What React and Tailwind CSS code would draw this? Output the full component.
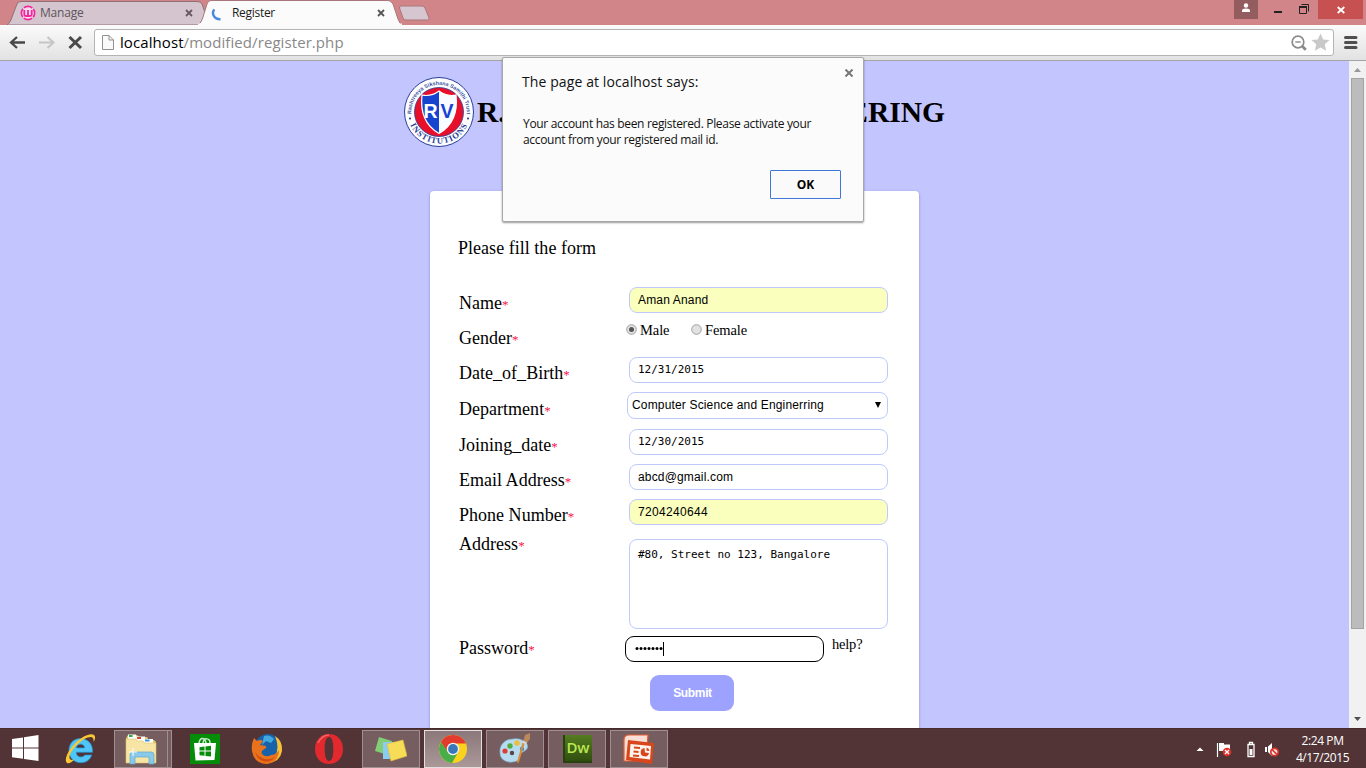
import React from "react";

const serif = "font-['Liberation_Serif',serif]";
const sans = "font-['Liberation_Sans',sans-serif]";
const mono = "font-['DejaVu_Sans_Mono',monospace]";
const ui = "font-['Open_Sans','Noto_Sans',sans-serif]";

function TabClose({ color }) {
  return (
    <svg className="h-2 w-2 shrink-0" viewBox="0 0 8 8">
      <path d="M1 1l6 6M7 1l-6 6" stroke={color} strokeWidth="1.8" />
    </svg>
  );
}

function TabStrip() {
  return (
    <div className="flex h-[25px] shrink-0 bg-[#d28589] pl-[7px]">
      <div className="relative z-0 flex h-[25px] w-[191px] items-center pl-[13px]">
        <svg className="absolute top-0 left-0 -z-10 h-[25px] w-[200px]" viewBox="0 0 200 25">
          <path d="M0 25C3 23 4 20 5 17L10 4Q11 1.5 14 1.5H190Q194 1.5 195 4L200 18V25Z" fill="#d5c5cf" stroke="#8f7078" strokeWidth="1" />
        </svg>
        <svg className="h-4 w-4 shrink-0" viewBox="0 0 16 16">
          <circle cx="8" cy="8" r="6.6" fill="#f6dcec" stroke="#f0269b" strokeWidth="1.7" strokeDasharray="9 1.37" strokeDashoffset="4.5" />
          <path d="M4.3 5V9.6Q4.3 11 6 11H10Q11.7 11 11.7 9.6V5M8 5v6" fill="none" stroke="#f0269b" strokeWidth="1.8" />
        </svg>
        <span className={`${ui} ml-1 w-[145px] text-[12px] leading-4 tracking-[-0.2px] text-[#5d565a]`}>Manage</span>
        <TabClose color="#665b60" />
      </div>
      <div className="relative z-10 flex h-[25px] w-[200px] items-center pl-[13px]">
        <svg className="absolute top-0 left-0 -z-10 h-[25px] w-[204px]" viewBox="0 0 204 25">
          <path d="M0 25C3 23 4 20 5 17L9 4Q10 .5 13 .5H190Q193 .5 195 4L200 19Q202 24 204 25Z" fill="#fbfbfb" stroke="#a8777c" strokeWidth="1" />
          <path d="M0 24.5H204" stroke="#fbfbfb" strokeWidth="2" />
        </svg>
        <svg className="h-4 w-[11px] shrink-0" viewBox="0 0 11 16">
          <path d="M3.3 4.4C.2 8.5 3 14.5 9.5 14.3" fill="none" stroke="#4688e0" strokeWidth="2.4" />
        </svg>
        <span className={`${ui} ml-[10px] w-[145px] text-[12px] leading-4 tracking-[-0.3px] text-[#1c1c1c]`}>Register</span>
        <TabClose color="#555" />
      </div>
      <svg className="mt-[5px] h-4 w-8" viewBox="0 0 32 16">
        <path d="M1.5 3Q1 1 3 1H24Q26 1 27 3L31 13Q31.500 15 29.500 15H8Q6 15 5 13Z" fill="#d6c6cf" stroke="#aa767d" />
      </svg>
      <div className="ml-auto flex h-[19px]">
        <div className="flex w-6 items-start justify-center bg-[#935c5f] pt-[3px]">
          <svg className="h-[10px] w-[10px]" viewBox="0 0 10 10" fill="#fff">
            <circle cx="5" cy="2.5" r="2.2" />
            <path d="M1 9V7.500Q1 5.500 5 5.500T9 7.500V9Z" />
          </svg>
        </div>
        <svg className="h-[19px] w-[60px]" viewBox="0 0 60 19">
          <path d="M16 12h8" stroke="#222" strokeWidth="2" />
          <path d="M43.500 4.500H50.500V11.500M41.500 6.500h7v7h-7z" fill="none" stroke="#222" />
          <path d="M41 7h8" stroke="#222" strokeWidth="2" />
        </svg>
        <div className="mr-[3px] flex w-[45px] items-center justify-center bg-[#c75050]">
          <svg className="h-2 w-2" viewBox="0 0 8 8"><path d="M.7 1l6.600 6M7.300 1l-6.600 6" stroke="#fff" strokeWidth="1.800" /></svg>
        </div>
      </div>
    </div>
  );
}

function Toolbar() {
  return (
    <div className="flex h-9 shrink-0 items-start border-b border-[#a5a5a5] bg-linear-to-b from-[#fbfbfb] to-[#e2e2e2] pt-1">
      <svg className="h-[27px] w-[94px] shrink-0" viewBox="0 0 94 27" fill="none">
        <path d="M25 13.500H11.500M17 8L11 13.500L17 19" stroke="#484848" strokeWidth="2.300" />
        <path d="M39 13.500H52.500M47.500 8L53.500 13.500L47.500 19" stroke="#c6c6c6" strokeWidth="2.100" />
        <path d="M69.500 8l11.500 11M81 8L69.500 19" stroke="#484848" strokeWidth="3" />
      </svg>
      <div className="flex h-[27px] w-[1240px] items-center rounded-[3px] border border-[#b4b4b4] bg-white pl-[7px]">
        <svg className="h-[15px] w-3" viewBox="0 0 12 15">
          <path d="M.5.5H7L11.500 5V14.500H.500Z" fill="#fafafa" stroke="#919191" />
          <path d="M7 .5V5H11.500" fill="none" stroke="#919191" />
        </svg>
        <span className={`${ui} ml-[6px] pb-[2px] text-[15px] leading-5 tracking-[0.08px] whitespace-nowrap text-[#888]`}>
          <span className="text-black">localhost</span>/modified/register.php
        </span>
        <svg className="ml-auto h-[27px] w-[43px]" viewBox="0 0 43 27">
          <circle cx="8" cy="13" r="5.800" fill="none" stroke="#8b8b8b" strokeWidth="1.700" />
          <path d="M5.300 13h5.400" stroke="#8b8b8b" strokeWidth="1.400" />
          <path d="M12.200 17.200l3.600 3.600" stroke="#8b8b8b" strokeWidth="2.800" />
          <path d="M30.500 4.500l2.700 6 6.300.6-4.700 4.200 1.300 6.400-5.600-3.300-5.600 3.300 1.300-6.400-4.700-4.200 6.300-.6z" fill="#c9c9c9" />
        </svg>
      </div>
      <svg className="ml-[10px] h-[27px] w-[14px]" viewBox="0 0 14 27">
        <path d="M1.500 8.500h10.500M1.500 13.500h10.500M1.500 18.500h10.500" stroke="#505050" strokeWidth="3" strokeLinecap="round" />
      </svg>
    </div>
  );
}

function Crest() {
  return (
    <svg className="h-[72px] w-[72px] shrink-0" viewBox="0 0 72 72">
      <defs>
        <path id="crest-top" d="M8.300 39A27.800 27.800 0 1 1 63.700 39" />
        <path id="crest-bottom" d="M4.500 36a31.500 31.500 0 0 0 63 0" />
      </defs>
      <circle cx="36" cy="36" r="34.500" fill="#fdfdff" stroke="#2a4098" strokeWidth="1" />
      <circle cx="36" cy="36" r="24.500" fill="#e80f2a" stroke="#2a4098" strokeWidth=".8" />
      <path d="M36 15Q28 21 19 19Q16 46 36 57.500Z" fill="#1644cf" />
      <path d="M36 15Q44 21 53 19Q56 46 36 57.500Z" fill="#f8fbff" />
      <path d="M36 15Q28 21 19 19Q16 46 36 57.500Q56 46 53 19Q44 21 36 15Z" fill="none" stroke="#fff" strokeWidth="1.200" />
      <text x="20.500" y="41.500" fontSize="19.500" fontWeight="bold" fontFamily="Liberation Sans, sans-serif" fill="#fff">R</text>
      <text x="37.500" y="41.500" fontSize="19.500" fontWeight="bold" fontFamily="Liberation Sans, sans-serif" fill="#1644cf">V</text>
      <text fontSize="5.300" fontWeight="bold" fontFamily="Liberation Sans, sans-serif" fill="#36549f">
        <textPath href="#crest-top" startOffset="1" textLength="90">Rashtreeya Sikshana Samithi Trust</textPath>
      </text>
      <text fontSize="8.500" fontWeight="bold" letterSpacing=".9" fontFamily="Liberation Serif, serif" fill="#2a4098" textAnchor="middle">
        <textPath href="#crest-bottom" startOffset="50%">INSTITUTIONS</textPath>
      </text>
      <circle cx="7" cy="42.500" r="1.100" fill="#2a4098" />
      <circle cx="65" cy="42.500" r="1.100" fill="#2a4098" />
    </svg>
  );
}

function Row({ label, height, pad, children }) {
  return (
    <div className={`flex shrink-0 items-start ${height}`}>
      <div className={`w-[170px] shrink-0 text-[18px] leading-5 tracking-[0.02px] whitespace-nowrap text-black ${pad}`}>
        {label}
        <span className="text-[13px] leading-none text-[#f8134b]">*</span>
      </div>
      {children}
    </div>
  );
}

function Field({ value, tone = "bg-white", face = sans }) {
  return (
    <div className={`flex h-[26px] w-[259px] items-center rounded-[8px] border border-[#bfcafb] pl-[8px] text-black ${tone} ${face}`}>
      {value}
    </div>
  );
}

const sansText = `${sans} text-[12px] tracking-[0.16px]`;
const monoText = `${mono} text-[11px]`;

function Radio({ checked }) {
  return (
    <svg className="h-[11px] w-[11px]" viewBox="0 0 11 11">
      <circle cx="5.500" cy="5.500" r="4.800" fill="#e2e2e2" stroke="#a0a0a0" />
      {checked && <circle cx="5.500" cy="5.500" r="2.500" fill="#555" />}
    </svg>
  );
}

function Form() {
  return (
    <div className={`${serif} ml-[430px] flex h-[537px] w-[489px] shrink-0 flex-col rounded-t-[4px] bg-white pl-[29px] shadow-[0_1px_2px_1px_rgba(110,110,170,0.3)]`}>
      <div className="-ml-px h-[96px] shrink-0 pt-[47px] text-[18px] leading-5 tracking-[0.03px] text-black">Please fill the form</div>
      <Row label="Name" height="h-[35px]" pad="pt-[6px]">
        <Field value="Aman Anand" tone="bg-[#faffbd]" face={sansText} />
      </Row>
      <Row label="Gender" height="h-[35px]" pad="pt-[6px]">
        <div className="-ml-[3px] flex items-start pt-[2px] text-[14.500px] leading-4 tracking-[-0.1px] text-black">
          <Radio checked />
          <span className="-mt-[2px] ml-[3px] w-[51px]">Male</span>
          <Radio />
          <span className="-mt-[2px] ml-[3px]">Female</span>
        </div>
      </Row>
      <Row label="Date_of_Birth" height="h-[35px]" pad="pt-[6px]">
        <Field value="12/31/2015" face={monoText} />
      </Row>
      <Row label="Department" height="h-[37px]" pad="pt-[7px]">
        <div className={`${sansText} -ml-[2px] flex h-[27px] w-[261px] items-center justify-between rounded-[8px] border border-[#bfcafb] bg-white pr-[6px] pb-px pl-[4px] text-black`}>
          <span>Computer Science and Enginerring</span>
          <svg className="h-[6px] w-[6px]" viewBox="0 0 6 6"><path d="M0 0h6L3 6z" fill="#000" /></svg>
        </div>
      </Row>
      <Row label="Joining_date" height="h-[35px]" pad="pt-[6px]">
        <Field value="12/30/2015" face={monoText} />
      </Row>
      <Row label="Email Address" height="h-[35px]" pad="pt-[6px]">
        <Field value="abcd@gmail.com" face={sansText} />
      </Row>
      <Row label="Phone Number" height="h-[40px]" pad="pt-[6px]">
        <Field value="7204240644" tone="bg-[#faffbd]" face={`${sans} text-[12px] tracking-[0.33px]`} />
      </Row>
      <Row label="Address" height="h-[97px]" pad="-mt-[5px]">
        <div className={`${monoText} h-[90px] w-[259px] rounded-[8px] border border-[#bfcafb] bg-white pt-[8px] pl-[8px] leading-[14px] text-black`}>
          #80, Street no 123, Bangalore
        </div>
      </Row>
      <Row label="Password" height="h-[39px]" pad="pt-[2px]">
        <div className="-ml-[4px] flex h-[26px] w-[199px] items-center rounded-[9px] border border-black bg-white pl-[9px]">
          <svg className="h-[14px] w-[31px]" viewBox="0 0 31 14">
            {[0, 1, 2, 3, 4, 5, 6].map((n) => (
              <circle key={n} cx={2 + n * 4} cy="6.500" r="1.500" fill="#000" />
            ))}
            <path d="M28.500 0V14" stroke="#000" />
          </svg>
        </div>
        <span className="-mt-px ml-[8px] text-[14.500px] leading-[18px] tracking-[-0.2px] text-black">help?</span>
      </Row>
      <div className={`${sans} ml-[191px] flex h-9 w-[84px] shrink-0 items-center justify-center rounded-[9px] bg-[#9ea2ff] pl-px text-[12px] font-bold tracking-[-0.35px] text-white`}>
        Submit
      </div>
    </div>
  );
}

function Dialog() {
  return (
    <div className={`${ui} absolute top-[57px] left-[502px] z-20 flex h-[165px] w-[362px] flex-col rounded-[2px] border border-[#a8a8a8] bg-[#fbfbfb] pl-[20px] text-black shadow-[0_1px_2px_rgba(0,0,0,0.4)]`}>
      <div className="flex h-[58px] shrink-0 items-start justify-between pt-[11px] pr-[10px] pl-px">
        <h1 className="-ml-[2px] text-[14px] leading-[26px] tracking-[0.1px] text-[#111]">The page at localhost says:</h1>
        <svg className="h-2 w-2" viewBox="0 0 8 8"><path d="M.5.5l7 7M7.500.5l-7 7" stroke="#777" strokeWidth="2" /></svg>
      </div>
      <p className="h-[54px] shrink-0 text-[12px] leading-4 tracking-[-0.32px] whitespace-nowrap text-[#111]">
        Your account has been registered. Please activate your<br />account from your registered mail id.
      </p>
      <button className="ml-[247px] h-[29px] w-[71px] rounded-[1px] border border-[#4078d8] bg-[#fafafa] text-[12px] font-bold">OK</button>
    </div>
  );
}

function PageArea() {
  return (
    <div className="flex h-[667px] shrink-0">
      <div className="flex min-w-0 flex-1 flex-col overflow-hidden bg-[#c3c5ff]">
        <div className="flex h-[130px] shrink-0 items-start pt-[15px] pl-[403px]">
          <Crest />
          <div className={`${serif} ml-[2px] flex h-[72px] w-[468px] items-center justify-between text-[29.500px] font-bold whitespace-nowrap text-black`}>
            <span>R.</span>
            <span>ERING</span>
          </div>
        </div>
        <Form />
      </div>
      <div className="flex w-[17px] flex-col items-center bg-[#f1f1f1]">
        <svg className="h-[17px] w-[17px]" viewBox="0 0 17 17"><path d="M5 11L8.500 7L12 11Z" fill="#999" /></svg>
        <div className="h-[551px] w-[13px] border border-[#a3a3a3] bg-[#bcbcbc]" />
        <svg className="mt-auto h-[17px] w-[17px]" viewBox="0 0 17 17"><path d="M5 6L8.500 10L12 6Z" fill="#505050" /></svg>
      </div>
    </div>
  );
}

function Slot({ width, frame = "", children }) {
  return <div className={`flex h-[38px] items-center justify-center ${width} ${frame}`}>{children}</div>;
}

const open = "border border-[#a08f90] bg-[#765d60]";

function Taskbar() {
  return (
    <div className="flex h-10 shrink-0 items-center border-t border-[#462b2d] bg-[#523436]">
      <Slot width="w-[50px]">
        <svg className="h-[27px] w-[27px]" viewBox="0 0 27 27" fill="#fff">
          <path d="M0 4L11 2.400V12.500H0ZM12 2.200L26.500 0V12.500H12ZM0 13.500H11V23.800L0 22.200ZM12 13.500H26.500V26L12 24Z" />
        </svg>
      </Slot>
      <Slot width="w-[64px]">
        <svg className="mr-[2px] h-[34px] w-[34px]" viewBox="1 0 31 31">
          <path d="M16 6C9.500 6 5.500 11 5.500 17s4.500 11 11 11c4.500 0 8.300-2.500 9.800-7h-6.300c-.8 1.200-2 1.800-3.500 1.800-2.600 0-4.200-1.500-4.400-4.300H27C27.500 11 22.500 6 16 6zm-3.800 8.500c.3-2.200 1.800-3.400 3.900-3.400s3.600 1.300 3.800 3.400z" fill="#4fc6f7" stroke="#2793d2" strokeWidth=".7" />
          <path d="M3.500 28C0 24.500 8 11 17 5.500 23.500 1.200 29 1 29.300 4.500c.1 1.600-.4 3-1.300 4.700.2-2.400-.2-4.700-2.700-4.700C18 4.500 5.500 17.500 6 23.500c.1 2 2 2.400 4.500 1.500-2.800 2.800-5.400 4.300-7 3z" fill="#f9c933" />
        </svg>
      </Slot>
      <Slot width="w-[54px]" frame={open}>
        <svg className="h-8 w-9" viewBox="0 0 36 32">
          <path d="M3 5V28H15L33 30V9L31 7H26L24 4H16L14 2H5Z" fill="#e3c66d" />
          <path d="M5 1.500h8V8H5zM13 3.500h9V10h-9zM21 6h9v6h-9z" fill="#fff" />
          <path d="M6 2h3.500v2H6z" fill="#28ac45" /><path d="M14 4h4v2h-4z" fill="#d5482c" /><path d="M22 6.500h4.500v2H22z" fill="#3695dc" />
          <path d="M3 6h10l1.500 2H20l1.500 2H33V30H3Z" fill="#f6e5a4" stroke="#dcc06d" strokeWidth=".6" />
          <path d="M7 31V22Q7 19 10 19H28Q31 19 31 22V31H26V24H12V31Z" fill="#8ac9e9" stroke="#5ca9cf" strokeWidth=".7" />
          <path d="M10 15v8M6 19h8" stroke="#fff" />
        </svg>
      </Slot>
      <div className="h-[38px] w-1 border border-l-0 border-[#a08f90] bg-[#765d60]" />
      <Slot width="w-[65px]">
        <svg className="h-[30px] w-[30px]" viewBox="0 0 30 30">
          <path d="M0 0h30v30H0z" fill="#058c08" />
          <path d="M4 9h22l-1.500 17-19 .5z" fill="#fff" />
          <path d="M9 9C10 3 15 3 16 9M13 9c1-6 7-5 7 0" fill="none" stroke="#c9edc9" strokeWidth="1.500" />
          <path d="M9.500 13.200l5-.6v4h-5zM15.500 12.500l5.500-.7v4.800h-5.500zM9.500 17.500h5v4.300l-5-.5zM15.500 17.500H21v5l-5.500-.6z" fill="#058c08" />
        </svg>
      </Slot>
      <Slot width="w-[60px]">
        <svg className="h-8 w-8" viewBox="0 0 32 32">
          <circle cx="17" cy="14" r="13" fill="#1762a9" />
          <path d="M13 3Q19 1 23 6L20 10 15 8 11 12Z" fill="#43a8df" />
          <path d="M24 3Q32 8 31 18 29 29 17 30 19 25 24 23 29 15 24 3Z" fill="#f8c236" />
          <path d="M3 5L6 8Q9 6 12 8L9 12 15 13 15 15 12 17Q10 18 11 21 15 25 20 22 25 22 28 17 28 29 16 31 3 31 1 18 0 11 3 5Z" fill="#e9721d" />
          <path d="M4 19Q8 25 14 26 19 27 24 24 19 30 12 28 6 26 4 19Z" fill="#cf4d10" />
        </svg>
      </Slot>
      <Slot width="w-[64px]">
        <svg className="h-[30px] w-7" viewBox="0 0 28 30">
          <path fillRule="evenodd" d="M14 0C6 0 0 6 0 15s6 15 14 15 14-6 14-15S22 0 14 0zm0 3c3 0 4.300 5 4.300 12S17 27 14 27s-4.300-5-4.300-12S11 3 14 3z" fill="#e2292e" />
          <path d="M3 9C6 3 10 1 14 1" fill="none" stroke="#f16367" strokeWidth="1.500" />
        </svg>
      </Slot>
      <div className="ml-px flex gap-1">
        <Slot width="w-[58px]" frame={open}>
          <svg className="h-[26px] w-8" viewBox="0 0 32 26">
            <path d="M4 1L17 5 13 19 0 15Z" fill="#82cd76" /><path d="M8 6H23V23H8Z" fill="#8acdf1" />
            <path d="M12 8L28 4 32 20 16 25Z" fill="#f7dc57" stroke="#e2be38" strokeWidth=".6" />
          </svg>
        </Slot>
        <Slot width="w-[58px]" frame="border border-[#e4dede] bg-linear-to-b from-[#8c787a] to-[#aa9899]">
          <svg className="h-[30px] w-[30px]" viewBox="0 0 30 30">
            <circle cx="15" cy="15" r="14" fill="#fcd21d" />
            <path d="M2.900 8A14 14 0 0 1 28 9.500H15A6 6 0 0 0 9.800 18.500Z" fill="#e33b2d" />
            <path d="M2.900 8A14 14 0 0 0 14 29L20.300 18A6 6 0 0 1 9.800 18Z" fill="#4aae48" />
            <circle cx="15" cy="15" r="6.200" fill="#f2f5f8" /><circle cx="15" cy="15" r="4.900" fill="#3977bc" />
          </svg>
        </Slot>
        <Slot width="w-[58px]" frame={open}>
          <svg className="h-8 w-8" viewBox="0 0 32 32">
            <path d="M14 6C6 6 0 12 1 20 1 28 10 31 18 28 22 26 19 22 22 20 27 17 30 16 28 11 25 7 20 5 14 6Z" fill="#b7dcef" stroke="#7caecd" strokeWidth=".7" />
            <circle cx="6" cy="18" r="2.600" fill="#df3d34" /><circle cx="11" cy="13" r="2.700" fill="#52ad41" /><circle cx="18" cy="10" r="2.700" fill="#f0bf38" /><circle cx="13" cy="20" r="2.200" fill="#5a4545" /><circle cx="23" cy="16" r="2.200" fill="#3c8bc9" />
            <path d="M26 9L20 29Q19 31 18 29L24 8Z" fill="#e18b30" /><path d="M24 9L26 2 31 0 31 6 27 11Z" fill="#b9885b" /><path d="M23.500 8.500l4 2" stroke="#d5dbe1" strokeWidth="2" />
          </svg>
        </Slot>
        <Slot width="w-[58px]" frame={open}>
          <div className={`${ui} flex h-[28px] w-[29px] items-center justify-center border-b-2 border-l-2 border-[#29420d] bg-linear-to-b from-[#547c1f] to-[#304f10] text-[15px] font-semibold text-[#bbe850]`}>Dw</div>
        </Slot>
        <Slot width="w-[58px]" frame={open}>
          <svg className="h-[30px] w-8" viewBox="0 0 32 30">
            <path d="M1 6Q1 1 6 1H25L23 27H1Z" fill="#f8ded5" stroke="#e45c31" strokeWidth="1.200" />
            <path d="M5 6L31 9 29 30 3 26Z" fill="#d8471c" />
            <path d="M7.500 10L28 12 27 25.500 6.500 23Z" fill="#fff5ef" />
            <path d="M11 13.500l6 .5M10.500 17.500l5 .5M10 21.500l6 .5" stroke="#d8471c" strokeWidth="2.200" />
            <path d="M21.500 14a4.200 4.200 0 1 0 4.500 5l-4-.6z" fill="#d8471c" />
            <path d="M23.500 13.500a4 4 0 0 1 3 3.500l-3-.3z" fill="#d8471c" />
          </svg>
        </Slot>
      </div>
      <div className="ml-auto flex items-center">
        <svg className="h-5 w-[86px]" viewBox="0 0 86 20">
          <path d="M.5 12L4 8.500 7.500 12Z" fill="#fff" />
          <path d="M21.500 4V18" stroke="#fff" strokeWidth="1.200" /><path d="M23 4h5v1.500h6V12H23Z" fill="#fff" />
          <circle cx="31" cy="13" r="4.300" fill="#dd3028" /><path d="M29 11l4 4M33 11l-4 4" stroke="#fff" strokeWidth="1.400" />
          <path d="M52 5.500h6v12h-6zM53.500 3.500h3v2h-3z" fill="none" stroke="#fff" strokeWidth="1.300" /><path d="M53.500 10h3v6h-3z" fill="#fff" />
          <path d="M69 8h2v5h-2zM72 7.500L76 4V17L72 13Z" fill="#fff" />
          <circle cx="78.500" cy="13" r="3.700" fill="#f7eaea" stroke="#dd3028" strokeWidth="1.700" /><path d="M76 10.500l5 5" stroke="#dd3028" strokeWidth="1.700" />
        </svg>
        <div className={`${ui} ml-[3px] w-[81px] pr-[6px] text-center text-[12px] leading-[17px] tracking-[-0.4px] text-white`}>
          2:24 PM<br />4/17/2015
        </div>
      </div>
    </div>
  );
}

export default function App() {
  return (
    <div className="relative flex h-[768px] w-[1366px] flex-col overflow-hidden">
      <TabStrip />
      <Toolbar />
      <PageArea />
      <Taskbar />
      <Dialog />
    </div>
  );
}
